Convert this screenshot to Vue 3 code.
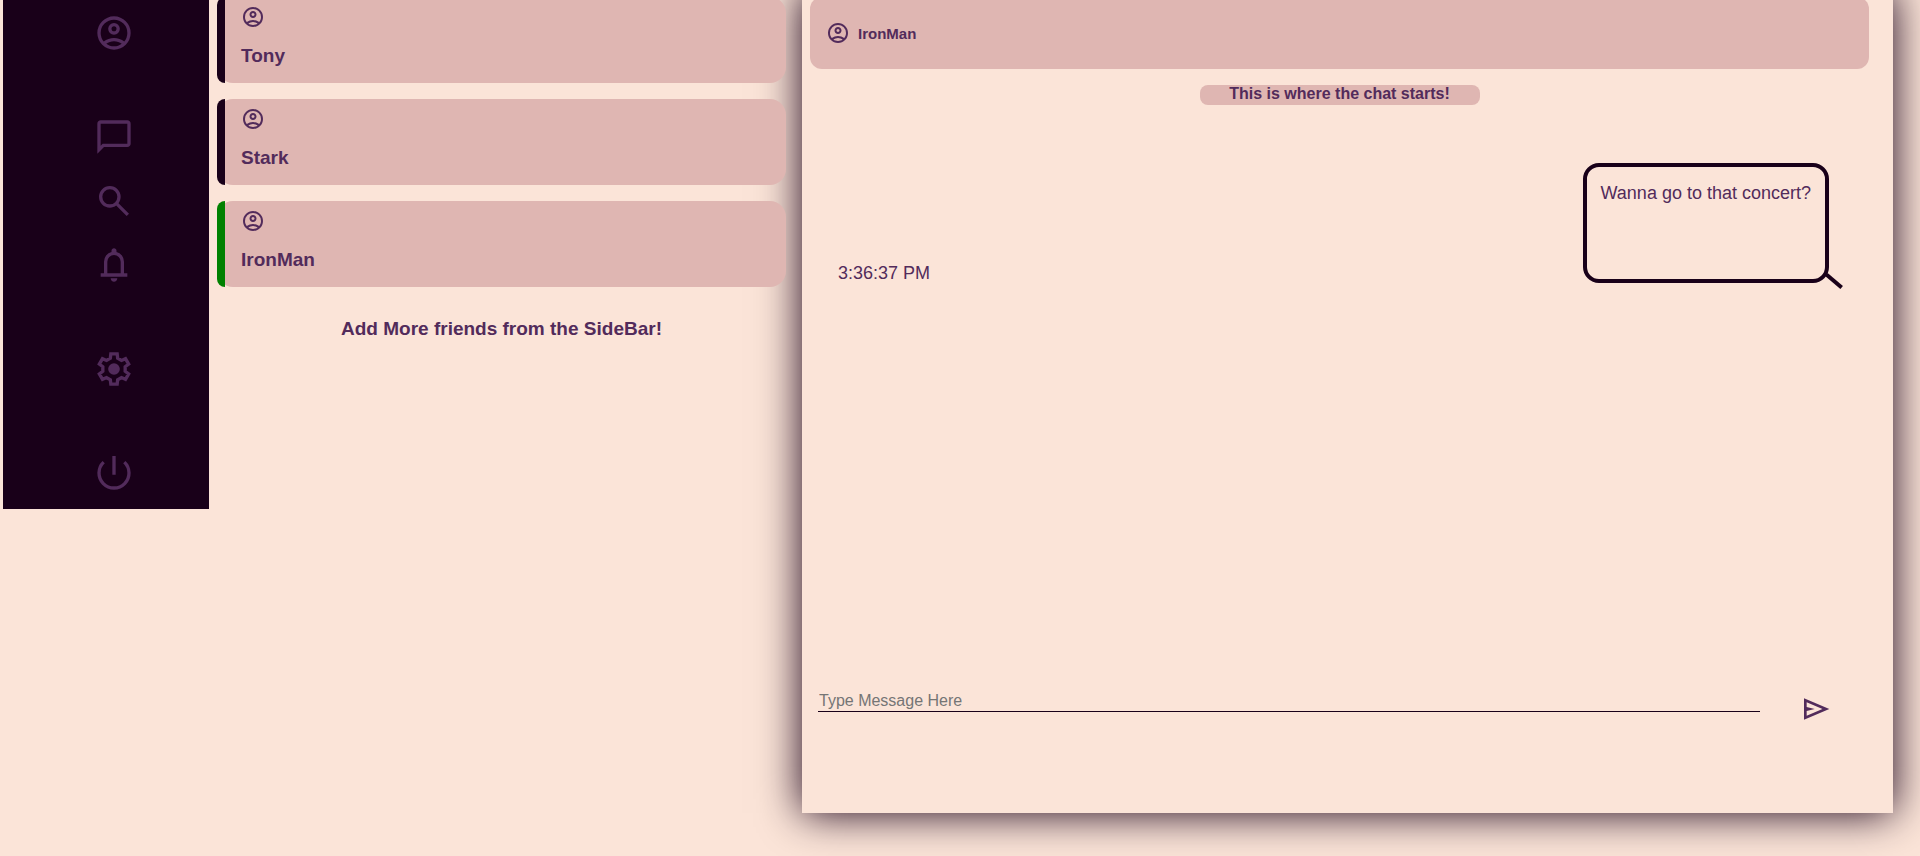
<script setup>
import { ref } from 'vue'

const paths = {
  account:
    'M5.85 17.1q1.275-.975 2.85-1.537T12 15t3.3.563 2.85 1.537q.875-1.025 1.363-2.325T20 12q0-3.325-2.338-5.663T12 4 6.337 6.338 4 12q0 1.475.488 2.775T5.85 17.1ZM12 13q-1.475 0-2.488-1.012T8.5 9.5t1.013-2.488T12 6t2.488 1.012T15.5 9.5t-1.012 2.488T12 13Zm0 9q-2.075 0-3.9-.788t-3.175-2.137T2.788 15.9 2 12t.788-3.9 2.137-3.175T8.1 2.788 12 2t3.9.788 3.175 2.137T21.213 8.1 22 12t-.788 3.9-2.137 3.175T15.9 21.213 12 22Zm0-2q1.325 0 2.5-.387t2.15-1.113q-.975-.725-2.15-1.113T12 17t-2.5.387-2.15 1.113q.975.725 2.15 1.113T12 20Zm0-9q.65 0 1.075-.425T13.5 9.5t-.425-1.075T12 8t-1.075.425T10.5 9.5t.425 1.075T12 11Z',
  chat: 'M2 22V4q0-.825.588-1.413T4 2h16q.825 0 1.413.588T22 4v12q0 .825-.588 1.413T20 18H6l-4 4Zm2-4.825L5.175 16H20V4H4v13.175Z',
  search:
    'M19.6 21l-6.3-6.3q-.75.6-1.725.95T9.5 16q-2.725 0-4.612-1.888T3 9.5t1.888-4.612T9.5 3t4.613 1.888T16 9.5q0 1.1-.35 2.075T14.7 13.3l6.3 6.3-1.4 1.4ZM9.5 14q1.875 0 3.188-1.313T14 9.5 12.688 6.313 9.5 5 6.313 6.313 5 9.5t1.313 3.188T9.5 14Z',
  bell: 'M4 19v-2h2v-7q0-2.075 1.25-3.688T10.5 4.2v-.7q0-.625.438-1.063T12 2t1.063.438T13.5 3.5v.7q2 .5 3.25 2.113T18 10v7h2v2H4Zm8 3q-.825 0-1.413-.588T10 20h4q0 .825-.588 1.413T12 22Zm-4-5h8v-7q0-1.65-1.175-2.825T12 6 9.175 7.175 8 10v7Z',
  send: 'M3 20V4l19 8-19 8Zm2-3 11.85-5L5 7v3.5l6 1.5-6 1.5V17Z',
}

const mainLinks = [
  { label: 'Chats', icon: 'chat' },
  { label: 'Search', icon: 'search' },
  { label: 'Notifications', icon: 'bell' },
]

const friends = [
  { name: 'Tony', online: false },
  { name: 'Stark', online: false },
  { name: 'IronMan', online: true },
]

const draft = ref('')
</script>

<template>
  <div class="app">
    <nav class="sidebar" aria-label="Main">
      <button class="nav-item" type="button" aria-label="Profile">
        <svg viewBox="0 0 24 24"><path :d="paths.account" /></svg>
      </button>
      <div class="nav-group">
        <button v-for="l in mainLinks" :key="l.label" class="nav-item" type="button" :aria-label="l.label">
          <svg viewBox="0 0 24 24"><path :d="paths[l.icon]" /></svg>
        </button>
      </div>
      <button class="nav-item" type="button" aria-label="Settings">
        <svg viewBox="-12 -12 24 24">
          <polygon
            class="line"
            points="-1.9,-9.1 1.9,-9.1 2.2,-6.5 4.5,-5.15 6.9,-6.2 8.8,-2.9 6.7,-1.35 6.7,1.35 8.8,2.9 6.9,6.2 4.5,5.15 2.2,6.5 1.9,9.1 -1.9,9.1 -2.2,6.5 -4.5,5.15 -6.9,6.2 -8.8,2.9 -6.7,1.35 -6.7,-1.35 -8.8,-2.9 -6.9,-6.2 -4.5,-5.15 -2.2,-6.5"
          />
          <circle r="3.5" />
        </svg>
      </button>
      <button class="nav-item" type="button" aria-label="Log out">
        <svg viewBox="-12 -12 24 24">
          <path class="line" d="M-6.2-6.5A9 9 0 1 0 6.2-6.5M0-10.2V1" />
        </svg>
      </button>
    </nav>

    <main class="friends">
      <button v-for="f in friends" :key="f.name" class="friend" :class="{ online: f.online }" type="button">
        <span class="status"></span>
        <span class="info">
          <svg class="avatar" viewBox="0 0 24 24"><path :d="paths.account" /></svg>
          <span class="name">{{ f.name }}</span>
        </span>
      </button>
      <h3 class="hint">Add More friends from the SideBar!</h3>
    </main>

    <section class="chat">
      <header class="chat-head">
        <svg class="avatar" viewBox="0 0 24 24"><path :d="paths.account" /></svg>
        <h4>IronMan</h4>
      </header>
      <p class="start">This is where the chat starts!</p>
      <div class="messages">
        <div class="message">
          <time>3:36:37 PM</time>
          <div class="bubble">Wanna go to that concert?</div>
        </div>
      </div>
      <form class="composer" @submit.prevent>
        <input v-model="draft" type="text" placeholder="Type Message Here" aria-label="Message" />
        <button class="send" type="submit" aria-label="Send">
          <svg viewBox="0 0 24 24"><path :d="paths.send" /></svg>
        </button>
      </form>
    </section>
  </div>
</template>

<style>
body {
  background: #fbe4d8;
}
</style>

<style scoped>
.app {
  box-sizing: border-box;
  display: grid;
  grid-template-columns: 206px minmax(0, 577fr) minmax(0, 1107fr);
  min-height: calc(100vh + 15px);
  margin-top: -15px;
  padding: 0 27px 43px 3px;
  overflow: hidden;
  background: #fbe4d8;
  color: #522b5b;
  font-family: 'Liberation Sans', Arial, sans-serif;
}
button {
  border: 0;
  padding: 0;
  background: none;
  color: inherit;
  font: inherit;
  text-align: left;
  cursor: pointer;
}
svg {
  display: block;
  fill: currentColor;
}
h3,
h4,
p {
  margin: 0;
}
.line {
  fill: none;
  stroke: currentColor;
  stroke-width: 2;
}

.sidebar {
  align-self: start;
  display: flex;
  flex-direction: column;
  gap: 40px;
  padding: 16px 0 4px 16px;
  background: #190019;
}
.nav-group {
  display: flex;
  flex-direction: column;
}
.nav-item {
  display: flex;
  justify-content: center;
  padding: 12px 0;
}
.nav-item svg {
  width: 40px;
  height: 40px;
}

.friends {
  position: relative;
  z-index: 1;
  display: flex;
  flex-direction: column;
  gap: 16px;
  padding: 12px 0 0 8px;
}
.friend {
  display: flex;
  height: 86px;
  border-radius: 16px;
  background: #dfb6b2;
}
.status {
  flex: none;
  width: 8px;
  height: 100%;
  border-radius: 8px 0 0 8px;
  background: #190019;
}
.online .status {
  background: #008000;
}
.info {
  display: flex;
  flex-direction: column;
  gap: 16px;
  padding: 8px 16px;
}
.avatar {
  width: 24px;
  height: 24px;
}
.name,
.hint {
  font-size: 19px;
  line-height: 22px;
  font-weight: bold;
}
.hint {
  margin-top: 15px;
  text-align: center;
}

.chat {
  display: flex;
  flex-direction: column;
  margin: 4px 0 0 16px;
  padding: 8px 24px 88px 8px;
  background: #fbe4d8;
  box-shadow: 0 0 40px #190019;
}
.chat-head {
  display: flex;
  align-items: center;
  gap: 8px;
  height: 72px;
  padding: 0 16px;
  border-radius: 12px;
  background: #dfb6b2;
}
.chat-head h4 {
  padding-top: 2px;
  font-size: 15px;
  line-height: 18px;
}
.start {
  align-self: center;
  width: 280px;
  margin-top: 16px;
  border-radius: 8px;
  background: #dfb6b2;
  font-size: 16px;
  font-weight: bold;
  line-height: 18px;
  padding-bottom: 2px;
  text-align: center;
}
.messages {
  flex: 1;
  padding: 58px 40px 16px 28px;
}
.message {
  display: flex;
  justify-content: space-between;
  align-items: flex-end;
  font-size: 18px;
  line-height: 20px;
}
.bubble {
  position: relative;
  box-sizing: border-box;
  min-height: 120px;
  padding: 16px 14px;
  border: 4px solid #190019;
  border-radius: 16px;
}
.bubble::after {
  content: '';
  position: absolute;
  right: -19px;
  bottom: -4px;
  width: 20px;
  height: 4px;
  background: #190019;
  transform: rotate(40deg);
}
.composer {
  display: flex;
  align-items: flex-start;
  gap: 40px;
  padding: 0 37px 0 8px;
}
.composer input {
  flex: 1;
  min-width: 0;
  padding: 1px;
  border: 0;
  border-bottom: 1px solid #190019;
  outline: none;
  background: transparent;
  color: inherit;
  font: 16px/18px 'Liberation Sans', Arial, sans-serif;
}
.composer input::placeholder {
  color: #757575;
}
.send {
  padding-top: 2px;
}
.send svg {
  width: 32px;
  height: 32px;
}
</style>
